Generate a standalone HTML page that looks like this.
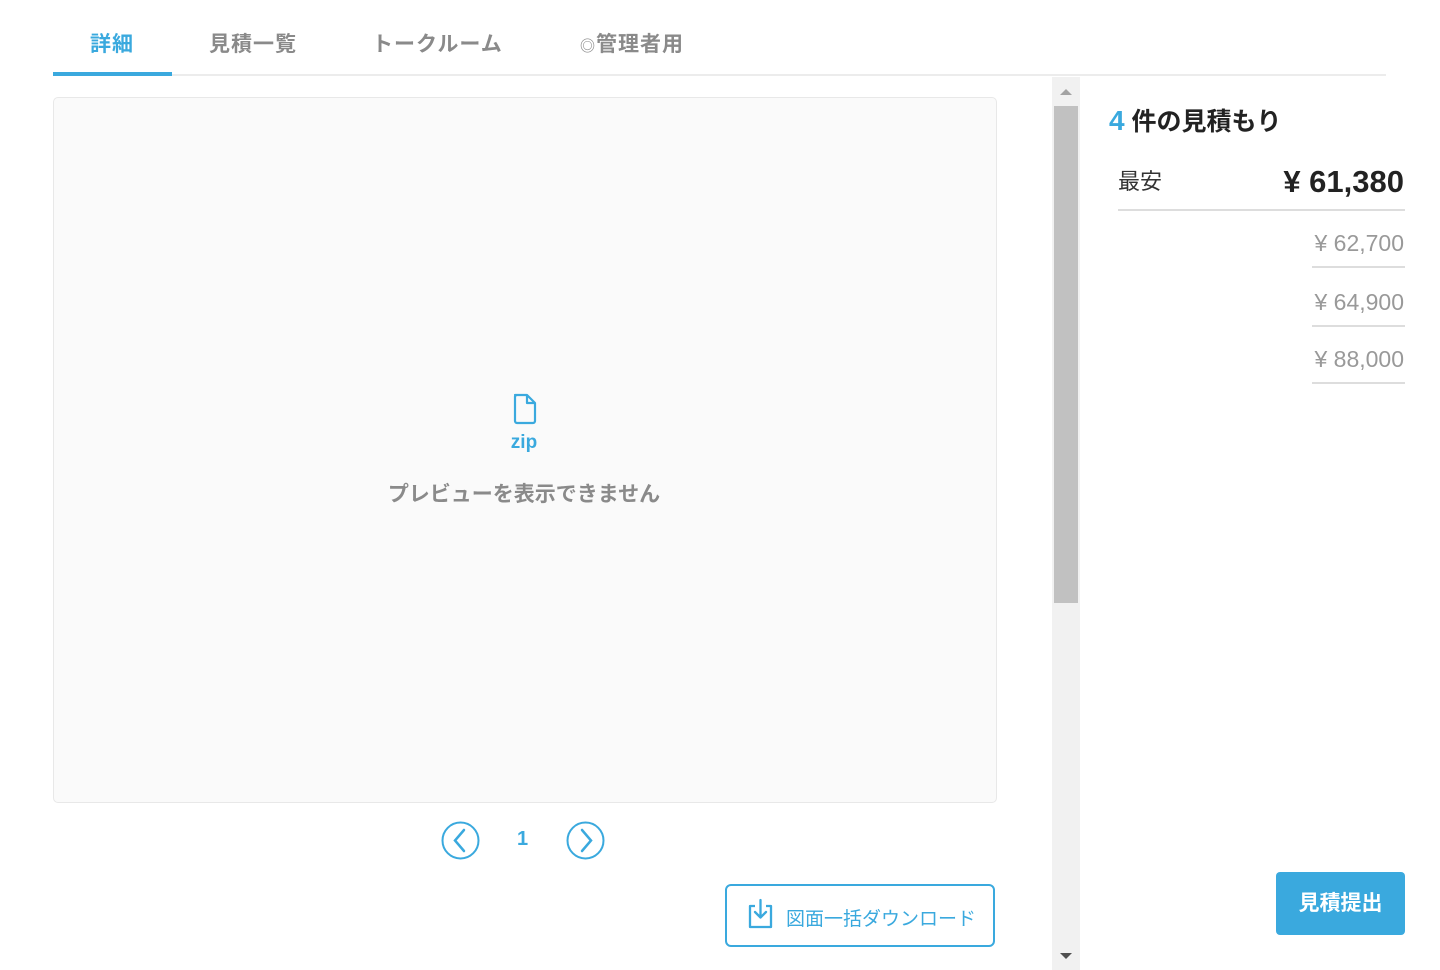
<!DOCTYPE html>
<html><head><meta charset="utf-8"><style>
*{margin:0;padding:0;box-sizing:border-box}
body{width:1440px;height:970px;background:#fff;font-family:"Liberation Sans","Noto Sans CJK JP",sans-serif;position:relative;overflow:hidden}
.a{position:absolute}
.tab{position:absolute;top:28px;font-size:21px;color:#8a8a8a;font-weight:bold;white-space:nowrap;letter-spacing:1px}
.price{position:absolute;right:36px;font-size:23px;color:#999;text-align:right}
.line{position:absolute;height:2px;background:#ddd}
</style></head><body>
<div class="tab" style="left:90px;color:#3aa9de">詳細</div>
<div class="tab" style="left:209px">見積一覧</div>
<div class="tab" style="left:372px">トークルーム</div>
<div class="tab" style="left:580px"><span style="font-size:15px">◎</span>管理者用</div>
<div class="a" style="left:53px;top:74px;width:1333px;height:2px;background:#ececec"></div>
<div class="a" style="left:53px;top:72px;width:119px;height:4px;background:#3aa9de"></div>

<div class="a" style="left:53px;top:97px;width:944px;height:706px;background:#fafafa;border:1px solid #e8e8e8;border-radius:5px"></div>
<svg class="a" style="left:512px;top:393px" width="26" height="32" viewBox="0 0 26 32"><path d="M3 2h12l8 8v18a2 2 0 0 1-2 2H5a2 2 0 0 1-2-2V4a2 2 0 0 1 2-2z M15 2v8h8" fill="none" stroke="#3aa9de" stroke-width="2.2" stroke-linejoin="round"/></svg>
<div class="a" style="left:0;width:1048px;top:432px;text-align:center;font-size:19px;color:#3aa9de;font-weight:bold">zip</div>
<div class="a" style="left:0;width:1048px;top:478px;text-align:center;font-size:21px;color:#8a8a8a;font-weight:bold">プレビューを表示できません</div>

<svg class="a" style="left:440px;top:820px" width="42" height="42"><circle cx="20.5" cy="20.5" r="18" fill="none" stroke="#3aa9de" stroke-width="2"/><path d="M24 10L15 20.5L24 31" fill="none" stroke="#3aa9de" stroke-width="2.5" stroke-linecap="round"/></svg>
<div class="a" style="left:517px;top:828px;font-size:20px;color:#3aa9de;font-weight:bold">1</div>
<svg class="a" style="left:565px;top:820px" width="42" height="42"><circle cx="20.5" cy="20.5" r="18" fill="none" stroke="#3aa9de" stroke-width="2"/><path d="M17 10L26 20.5L17 31" fill="none" stroke="#3aa9de" stroke-width="2.5" stroke-linecap="round"/></svg>

<div class="a" style="left:725px;top:884px;width:270px;height:63px;border:2px solid #3aa9de;border-radius:6px"></div>
<svg class="a" style="left:746px;top:898px" width="30" height="32" viewBox="0 0 30 32"><path d="M9 8H4v21h21V8h-5" fill="none" stroke="#3aa9de" stroke-width="2.3" stroke-linejoin="round"/><path d="M14.5 2v17M9 14l5.5 5.5L20 14" fill="none" stroke="#3aa9de" stroke-width="2.3" stroke-linecap="round" stroke-linejoin="round"/></svg>
<div class="a" style="left:786px;top:904px;font-size:19px;color:#3aa9de">図面一括ダウンロード</div>

<div class="a" style="left:1052px;top:77px;width:28px;height:893px;background:#f1f1f1"></div>
<div class="a" style="left:1054px;top:106px;width:24px;height:497px;background:#c1c1c1"></div>
<div class="a" style="left:1060px;top:89px;border-left:6px solid transparent;border-right:6px solid transparent;border-bottom:6px solid #a3a3a3"></div>
<div class="a" style="left:1060px;top:953px;border-left:6px solid transparent;border-right:6px solid transparent;border-top:6px solid #505050"></div>

<div class="a" style="left:1109px;top:102px;font-size:25px;font-weight:bold;color:#222"><span style="color:#3aa9de;font-size:28px">4</span> 件の見積もり</div>
<div class="a" style="left:1118px;top:164px;font-size:22px;color:#333">最安</div>
<div class="a" style="right:36px;top:164px;font-size:31px;color:#222;font-weight:600">¥ 61,380</div>
<div class="line" style="left:1118px;width:287px;top:209px"></div>
<div class="price" style="top:230px">¥ 62,700</div>
<div class="line" style="left:1312px;width:93px;top:266px"></div>
<div class="price" style="top:289px">¥ 64,900</div>
<div class="line" style="left:1312px;width:93px;top:325px"></div>
<div class="price" style="top:346px">¥ 88,000</div>
<div class="line" style="left:1312px;width:93px;top:382px"></div>

<div class="a" style="left:1276px;top:872px;width:129px;height:63px;background:#3aa9de;border-radius:4px;color:#fff;font-weight:bold;font-size:21px;text-align:center;line-height:63px">見積提出</div>
</body></html>
